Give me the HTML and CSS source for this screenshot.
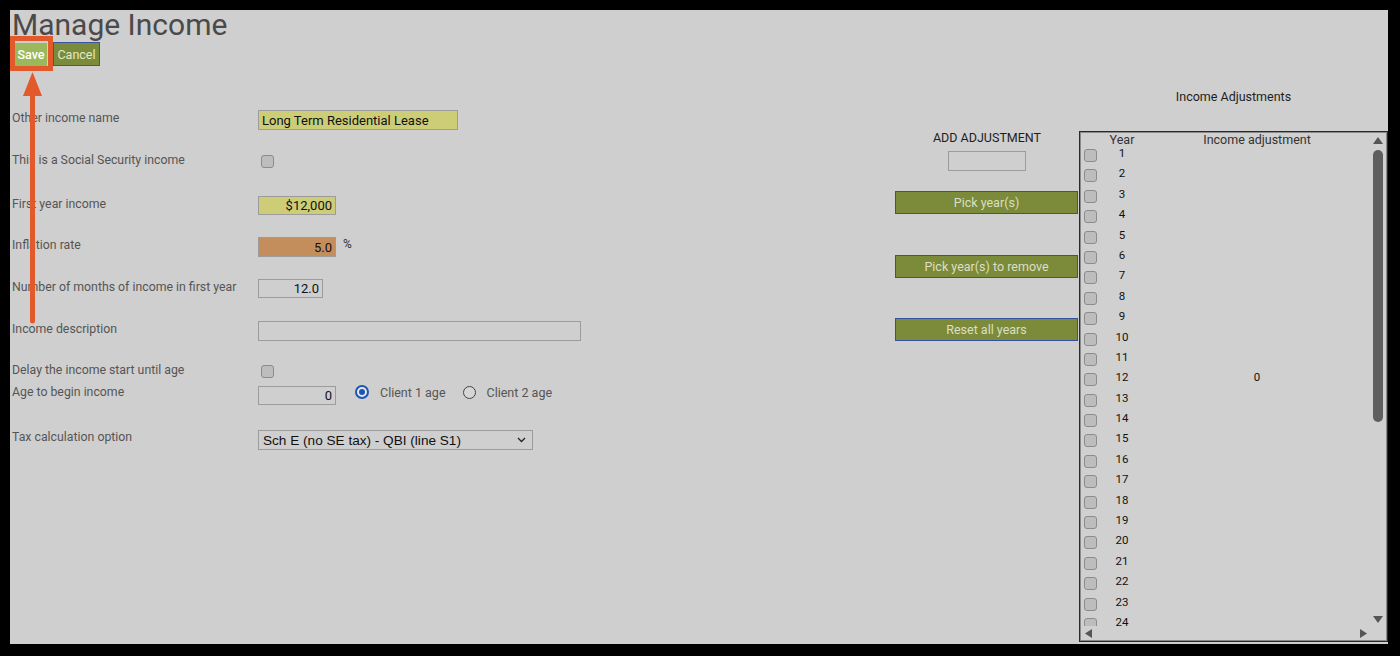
FILE: index.html
```html
<!DOCTYPE html>
<html>
<head>
<meta charset="utf-8">
<title>Manage Income</title>
<link rel="stylesheet" href="styles.css">
</head>
<body>
<div class="screen">
  <h1 class="title">Manage Income</h1>
  <div class="actions">
    <button class="btn btn-save">Save</button>
    <button class="btn btn-cancel">Cancel</button>
  </div>
  <div class="content">
    <div class="form">
      <div class="row h42">
        <label class="lbl">Other income name</label>
        <input class="inp yellow w200" value="Long Term Residential Lease">
      </div>
      <div class="row h44">
        <label class="lbl">This is a Social Security income</label>
        <span class="cb mt3"></span>
      </div>
      <div class="row h41">
        <label class="lbl">First year income</label>
        <input class="inp yellow w78 h19 ta-r" value="$12,000">
      </div>
      <div class="row h42">
        <label class="lbl">Inflation rate</label>
        <div class="inline">
          <input class="inp orange w78 ta-r" value="5.0">
          <span class="unit">%</span>
        </div>
      </div>
      <div class="row h42">
        <label class="lbl">Number of months of income in first year</label>
        <input class="inp w65 h19 ta-r" value="12.0">
      </div>
      <div class="row h41">
        <label class="lbl">Income description</label>
        <input class="inp w323" value="">
      </div>
      <div class="row h22">
        <label class="lbl">Delay the income start until age</label>
        <span class="cb mt3"></span>
      </div>
      <div class="row h45">
        <label class="lbl">Age to begin income</label>
        <div class="inline mt2">
          <input class="inp w78 h19 ta-r" value="0">
          <span class="radio on r1"></span><span class="rlabel">Client 1 age</span>
          <span class="radio r2"></span><span class="rlabel">Client 2 age</span>
        </div>
      </div>
      <div class="row">
        <label class="lbl">Tax calculation option</label>
        <div class="select mt1">
          <span class="select-text">Sch E (no SE tax) - QBI (line S1)</span>
          <svg class="chev" width="9" height="6" viewBox="0 0 9 6"><path d="M1 1 L4.5 4.5 L8 1" fill="none" stroke="#222" stroke-width="1.3"/></svg>
        </div>
      </div>
    </div>

    <div class="middle">
      <div class="add-title">ADD ADJUSTMENT</div>
      <input class="inp add-inp" value="">
      <button class="btn btn-wide first">Pick year(s)</button>
      <button class="btn btn-wide second">Pick year(s) to remove</button>
      <button class="btn btn-wide third">Reset all years</button>
    </div>

    <div class="side">
      <div class="adj-title">Income Adjustments</div>
      <div class="adj-box">
        <div class="adj-main">
          <div class="adj-list">
            <div class="thead"><span></span><span>Year</span><span>Income adjustment</span></div>
            <div class="trow"><span class="cb"></span><span class="yr">1</span><span class="val"></span></div>
            <div class="trow"><span class="cb"></span><span class="yr">2</span><span class="val"></span></div>
            <div class="trow"><span class="cb"></span><span class="yr">3</span><span class="val"></span></div>
            <div class="trow"><span class="cb"></span><span class="yr">4</span><span class="val"></span></div>
            <div class="trow"><span class="cb"></span><span class="yr">5</span><span class="val"></span></div>
            <div class="trow"><span class="cb"></span><span class="yr">6</span><span class="val"></span></div>
            <div class="trow"><span class="cb"></span><span class="yr">7</span><span class="val"></span></div>
            <div class="trow"><span class="cb"></span><span class="yr">8</span><span class="val"></span></div>
            <div class="trow"><span class="cb"></span><span class="yr">9</span><span class="val"></span></div>
            <div class="trow"><span class="cb"></span><span class="yr">10</span><span class="val"></span></div>
            <div class="trow"><span class="cb"></span><span class="yr">11</span><span class="val"></span></div>
            <div class="trow"><span class="cb"></span><span class="yr">12</span><span class="val">0</span></div>
            <div class="trow"><span class="cb"></span><span class="yr">13</span><span class="val"></span></div>
            <div class="trow"><span class="cb"></span><span class="yr">14</span><span class="val"></span></div>
            <div class="trow"><span class="cb"></span><span class="yr">15</span><span class="val"></span></div>
            <div class="trow"><span class="cb"></span><span class="yr">16</span><span class="val"></span></div>
            <div class="trow"><span class="cb"></span><span class="yr">17</span><span class="val"></span></div>
            <div class="trow"><span class="cb"></span><span class="yr">18</span><span class="val"></span></div>
            <div class="trow"><span class="cb"></span><span class="yr">19</span><span class="val"></span></div>
            <div class="trow"><span class="cb"></span><span class="yr">20</span><span class="val"></span></div>
            <div class="trow"><span class="cb"></span><span class="yr">21</span><span class="val"></span></div>
            <div class="trow"><span class="cb"></span><span class="yr">22</span><span class="val"></span></div>
            <div class="trow"><span class="cb"></span><span class="yr">23</span><span class="val"></span></div>
            <div class="trow"><span class="cb"></span><span class="yr">24</span><span class="val"></span></div>
          </div>
          <div class="vscroll">
            <div class="sb-btn"><svg width="10" height="7" viewBox="0 0 10 7"><path d="M5 0 L10 7 L0 7 Z" fill="#555"/></svg></div>
            <div class="sb-track"><div class="sb-thumb"></div></div>
            <div class="sb-btn"><svg width="10" height="7" viewBox="0 0 10 7"><path d="M0 0 L10 0 L5 7 Z" fill="#555"/></svg></div>
          </div>
        </div>
        <div class="hscroll">
          <div class="hs-btn"><svg width="7" height="9" viewBox="0 0 7 9"><path d="M7 0 L7 9 L0 4.5 Z" fill="#555"/></svg></div>
          <div class="hs-track"></div>
          <div class="hs-btn"><svg width="7" height="9" viewBox="0 0 7 9"><path d="M0 0 L7 4.5 L0 9 Z" fill="#555"/></svg></div>
          <div class="hs-corner"></div>
        </div>
      </div>
    </div>
  </div>

  <div class="highlight"></div>
  <svg class="arrow" width="24" height="256" viewBox="0 0 24 256">
    <path d="M12.5 2 L22 26 L3 26 Z" fill="#e2592c"/>
    <line x1="12.5" y1="24" x2="12.5" y2="251" stroke="#e2592c" stroke-width="5" stroke-linecap="round"/>
  </svg>
</div>
</body>
</html>
```

FILE: styles.css
```css
* { box-sizing: border-box; }
html, body { margin: 0; padding: 0; background: #000; }
body {
  width: 1400px;
  height: 656px;
  overflow: hidden;
  font-family: Roboto, "Noto Sans", sans-serif;
}
.screen {
  position: relative;
  margin: 10px 0 0 10px;
  width: 1378px;
  height: 634px;
  background: #cfcfcf;
  padding-left: 2px;
  padding-top: 1px;
}
.title {
  margin: 0;
  font-size: 30px;
  line-height: 27px;
  font-weight: 400;
  color: #4a4a4a;
}
.actions {
  display: flex;
  align-items: flex-end;
  margin-top: 4px;
  height: 24px;
}
.btn {
  font-family: Roboto, sans-serif;
  font-size: 12.5px;
  padding: 0;
  display: flex;
  align-items: center;
  justify-content: center;
  cursor: pointer;
}
.btn-save {
  margin-left: 3px;
  width: 32px;
  height: 23px;
  background: #9bb95c;
  border: none;
  color: #fff;
  font-weight: 500;
}
.btn-cancel {
  margin-left: 6px;
  width: 47px;
  height: 24px;
  background: #7a8b3b;
  border: 1px solid #3a56a0;
  color: #e4e9c8;
}
.content { display: flex; }
.form { width: 883px; padding-top: 44px; }
.row {
  display: grid;
  grid-template-columns: 246px auto;
  align-items: start;
}
.h22 { height: 22px; }
.h41 { height: 41px; }
.h42 { height: 42px; }
.h44 { height: 44px; }
.h45 { height: 45px; }
.mt1 { margin-top: 1px; }
.mt2 { margin-top: 2px; }
.mt3 { margin-top: 3px; }
.lbl {
  font-size: 12.3px;
  line-height: 14px;
  margin-top: 1px;
  color: #555;
}
.inp {
  height: 20px;
  border: 1px solid #9c9c9c;
  background: #cfcfcf;
  font-family: Roboto, sans-serif;
  font-size: 13px;
  color: #111;
  padding: 0 3px;
  outline: none;
  display: block;
}
.yellow { background: #cdcd78; }
.orange { background: #c48d5c; }
.ta-r { text-align: right; }
.w200 { width: 200px; }
.w78 { width: 78px; }
.w65 { width: 65px; }
.w323 { width: 323px; }
.h19 { height: 19px; }
.inline { display: flex; align-items: flex-start; }
.unit {
  font-size: 12px;
  color: #333;
  margin-left: 7px;
  line-height: 14px;
}
.cb {
  display: block;
  width: 13px;
  height: 13px;
  border: 1px solid #8c8c8c;
  border-radius: 3px;
  background: #bdbdbd;
  margin-left: 3px;
}
.radio {
  display: block;
  width: 14px;
  height: 14px;
  border-radius: 50%;
  border: 1.5px solid #444;
  background: #d6d6d6;
  position: relative;
}
.radio.on {
  border: 2px solid #1a55b8;
  background: #e8e8e8;
}
.radio.on::after {
  content: "";
  position: absolute;
  left: 2px; top: 2px;
  width: 6px; height: 6px;
  border-radius: 50%;
  background: #1a55b8;
}
.r1 { margin-left: 19px; margin-top: -1px; }
.r2 { margin-left: 17px; width: 13px; height: 13px; }
.rlabel {
  font-size: 12.5px;
  line-height: 14px;
  color: #555;
  margin-left: 11px;
}
.select {
  width: 275px;
  height: 20px;
  border: 1px solid #9c9c9c;
  background: #cfcfcf;
  display: flex;
  align-items: center;
  justify-content: space-between;
  padding: 0 6px 0 4px;
}
.select-text {
  font-family: "Liberation Sans", Arial, sans-serif;
  font-size: 13.6px;
  color: #111;
}
.chev { display: block; }

.middle {
  width: 184px;
  padding-top: 65px;
  display: flex;
  flex-direction: column;
  align-items: flex-start;
}
.add-title {
  width: 184px;
  text-align: center;
  font-size: 12.5px;
  line-height: 14px;
  color: #1e1e1e;
}
.add-inp {
  width: 78px;
  margin: 6px 0 0 53px;
}
.btn-wide {
  width: 183px;
  height: 23px;
  background: #7b8b3a;
  border: 1px solid #3450a0;
  color: #dcdfc4;
}
.btn-wide.first { margin-top: 20px; }
.btn-wide.second { margin-top: 41px; }
.btn-wide.third { margin-top: 40px; }

.side { width: 309px; padding-top: 24px; }
.adj-title {
  text-align: center;
  font-size: 12.5px;
  line-height: 14px;
  color: #1e1e1e;
  margin-bottom: 27px;
}
.adj-box {
  height: 511px;
  border: 1px solid #2a2a2a;
  box-shadow: inset 0 0 0 1px #8a8a8a;
  padding: 1px;
  display: flex;
  flex-direction: column;
  background: #d0d0d0;
}
.adj-main {
  flex: 1;
  min-height: 0;
  display: flex;
}
.adj-list {
  flex: 1;
  overflow: hidden;
  padding-left: 3px;
}
.thead, .trow {
  display: grid;
  grid-template-columns: 16px 44px 226px;
}
.thead {
  height: 13px;
  line-height: 13px;
  font-size: 12.5px;
  color: #333;
  text-align: center;
}
.trow { height: 20.4px; }
.trow .cb { margin: 3px 0 0 0; }
.yr, .val {
  text-align: center;
  font-size: 11.5px;
  line-height: 14px;
  color: #111;
}
.vscroll {
  width: 16px;
  display: flex;
  flex-direction: column;
}
.sb-btn {
  height: 14px;
  display: flex;
  align-items: center;
  justify-content: center;
}
.sb-btn svg { display: block; }
.sb-track { flex: 1; display: flex; flex-direction: column; align-items: center; }
.sb-thumb {
  margin-top: 3px;
  width: 10px;
  height: 272px;
  border-radius: 5px;
  background: #5e5e5e;
}
.hscroll {
  height: 14px;
  display: flex;
}
.hs-btn {
  width: 14px;
  display: flex;
  align-items: center;
  justify-content: center;
}
.hs-btn svg { display: block; }
.hs-track { flex: 1; }
.hs-corner { width: 16px; }

.highlight {
  position: absolute;
  left: 0;
  top: 26px;
  width: 43px;
  height: 35px;
  border: 5px solid #e2592c;
}
.arrow {
  position: absolute;
  left: 10px;
  top: 60px;
  display: block;
}
```
